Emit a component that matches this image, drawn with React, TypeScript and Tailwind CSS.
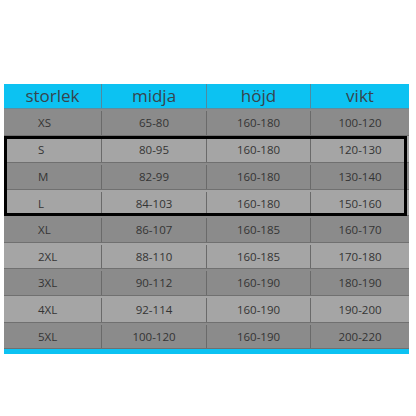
const rows = [
  ["XS", "65-80", "160-180", "100-120"],
  ["S", "80-95", "160-180", "120-130"],
  ["M", "82-99", "160-180", "130-140"],
  ["L", "84-103", "160-180", "150-160"],
  ["XL", "86-107", "160-185", "160-170"],
  ["2XL", "88-110", "160-185", "170-180"],
  ["3XL", "90-112", "160-190", "180-190"],
  ["4XL", "92-114", "160-190", "190-200"],
  ["5XL", "100-120", "160-190", "200-220"],
];

const heights = ["h-[27px]", "h-[27px]", "h-[27px]", "h-[26px]", "h-[27px]", "h-[26px]", "h-[27px]", "h-[27px]", "h-[26px]"];

function Row({ cells, index }: { cells: string[]; index: number }) {
  const bg = index % 2 === 0 ? "bg-[#8b8b8b]" : "bg-[#a5a5a5]";
  return (
    <div className={`flex border-b border-[#707070] ${bg} ${heights[index]} text-[11.5px] pt-[2px] text-[#343434]`}>
      <div className="w-[98px] flex items-center pl-[34px] border-r border-[#6a6a6a]">{cells[0]}</div>
      <div className="w-[105px] flex items-center justify-center border-r border-[#6a6a6a]">{cells[1]}</div>
      <div className="w-[104px] flex items-center justify-center border-r border-[#6a6a6a]">{cells[2]}</div>
      <div className="w-[98px] flex items-center justify-center">{cells[3]}</div>
    </div>
  );
}

export default function App() {
  return (
    <div className="w-[416px] h-[416px] bg-white pt-[84px] pl-[4px]" style={{ fontFamily: "'Open Sans', 'Noto Sans', sans-serif" }}>
      <div className="w-[405px]">
        {/* header */}
        <div className="flex h-[25px] bg-[#0cc2f2] border-b border-[#5d8da0] text-[17px] text-[#37454d]">
          <div className="w-[98px] flex items-center justify-center border-r border-[#4f8aa0]">storlek</div>
          <div className="w-[105px] flex items-center justify-center border-r border-[#4f8aa0]">midja</div>
          <div className="w-[104px] flex items-center justify-center border-r border-[#4f8aa0]">höjd</div>
          <div className="w-[98px] flex items-center justify-center">vikt</div>
        </div>
        <Row cells={rows[0]} index={0} />
        <div className="relative">
          <Row cells={rows[1]} index={1} />
          <Row cells={rows[2]} index={2} />
          <Row cells={rows[3]} index={3} />
          <div className="absolute top-0 left-0 right-[2px] bottom-0 border-[3px] border-black pointer-events-none" />
        </div>
        {rows.slice(4).map((r, i) => (
          <Row key={r[0]} cells={r} index={i + 4} />
        ))}
        <div className="h-[5px] bg-[#0cc2f2]" />
      </div>
    </div>
  );
}
